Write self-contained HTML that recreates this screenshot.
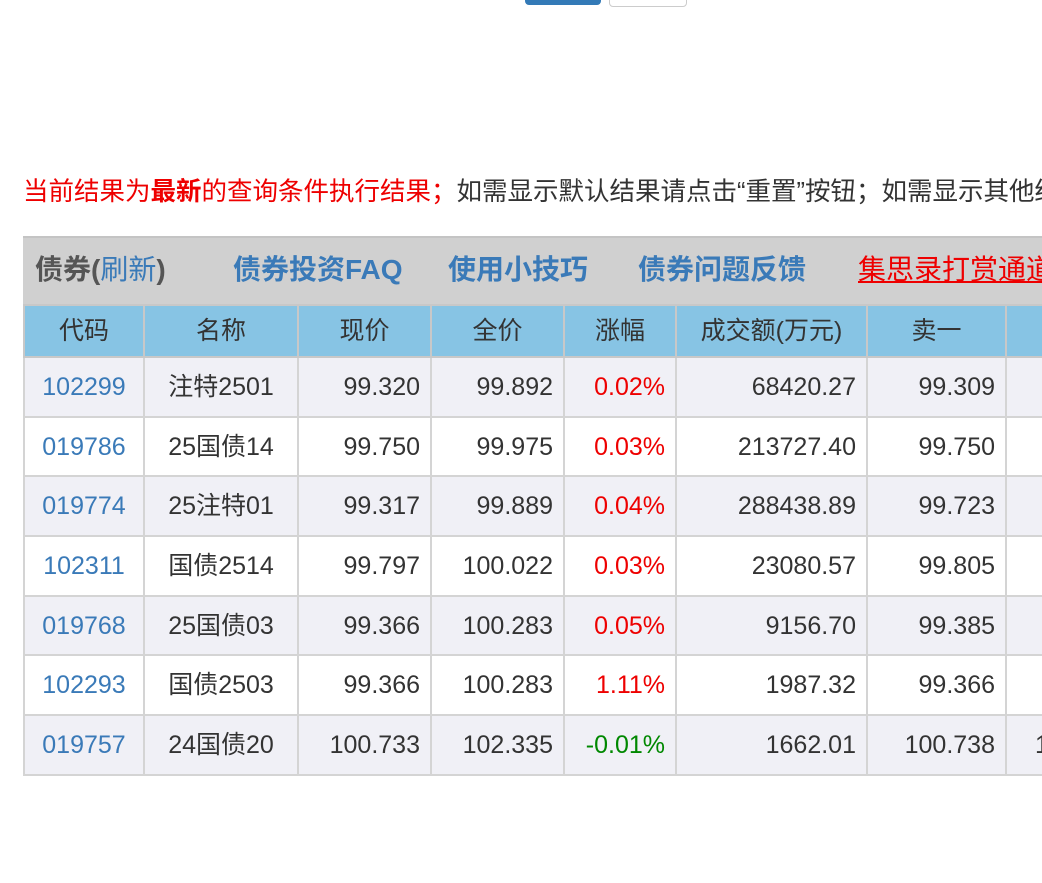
<!DOCTYPE html>
<html><head><meta charset="utf-8">
<style>
html,body{margin:0;padding:0;background:#fff;width:1042px;height:883px;overflow:hidden;font-family:"Liberation Sans","Noto Sans CJK SC",sans-serif;}
.b1{position:absolute;left:525px;top:-6px;width:76px;height:11px;background:#337ab7;border-radius:4px;}
.b2{position:absolute;left:609px;top:-6px;width:76px;height:11px;background:#fff;border:1px solid #ccc;border-radius:4px;}
.msg{position:absolute;left:23px;top:175px;font-size:25.5px;white-space:nowrap;color:#333;line-height:34px;}
.msg .r{color:#e00;}
.wrap{position:absolute;left:23px;top:236px;width:1019px;overflow:hidden;}
.bar{position:relative;height:68px;background:#d0d0d0;border-top:2px solid #c4c4c4;box-sizing:border-box;white-space:nowrap;font-size:28px;font-weight:bold;line-height:64px;color:#555;}
.bar span{position:absolute;top:0;}
.bar .l{color:#3a7ab8;}
.bar .n{font-weight:normal;color:#3a7ab8;position:static;}
.bar .red{color:#e00;text-decoration:underline;}
table{border-collapse:collapse;table-layout:fixed;font-size:25px;color:#333;width:1112px;}
td,th{border:2px solid #d4d4d4;padding:0 10px;height:57.7px;white-space:nowrap;overflow:hidden;vertical-align:middle;line-height:30px;}
th{background:#87c4e4;font-weight:normal;height:50px;border-color:#c8c8c8;}
tr:nth-child(even) td{background:#f0f0f6;}
td{text-align:right;}
td.c{text-align:center;color:#3a7ab8;}
td.m{text-align:center;}
.up{color:#e00;}.dn{color:#080;}
</style></head><body>
<div class="b1"></div><div class="b2"></div>
<div class="msg"><span class="r">当前结果为<b>最新</b>的查询条件执行结果；</span>如需显示默认结果请点击“重置”按钮；如需显示其他结果</div>
<div class="wrap">
<div class="bar"><span style="left:12px">债券(<span class="n">刷新</span>)</span><span class="l" style="left:210px">债券投资FAQ</span><span class="l" style="left:425px">使用小技巧</span><span class="l" style="left:615px">债券问题反馈</span><span class="red" style="left:835px;font-weight:normal">集思录打赏通道</span></div>
<table>
<colgroup><col style="width:120px"><col style="width:154px"><col style="width:133px"><col style="width:133px"><col style="width:112px"><col style="width:191px"><col style="width:139px"><col style="width:130px"></colgroup>
<tr><th>代码</th><th>名称</th><th>现价</th><th>全价</th><th>涨幅</th><th>成交额(万元)</th><th>卖一</th><th></th></tr>
<tr><td class="c">102299</td><td class="m">注特2501</td><td>99.320</td><td>99.892</td><td class="up">0.02%</td><td>68420.27</td><td>99.309</td><td></td></tr>
<tr><td class="c">019786</td><td class="m">25国债14</td><td>99.750</td><td>99.975</td><td class="up">0.03%</td><td>213727.40</td><td>99.750</td><td></td></tr>
<tr><td class="c">019774</td><td class="m">25注特01</td><td>99.317</td><td>99.889</td><td class="up">0.04%</td><td>288438.89</td><td>99.723</td><td></td></tr>
<tr><td class="c">102311</td><td class="m">国债2514</td><td>99.797</td><td>100.022</td><td class="up">0.03%</td><td>23080.57</td><td>99.805</td><td></td></tr>
<tr><td class="c">019768</td><td class="m">25国债03</td><td>99.366</td><td>100.283</td><td class="up">0.05%</td><td>9156.70</td><td>99.385</td><td></td></tr>
<tr><td class="c">102293</td><td class="m">国债2503</td><td>99.366</td><td>100.283</td><td class="up">1.11%</td><td>1987.32</td><td>99.366</td><td></td></tr>
<tr><td class="c">019757</td><td class="m">24国债20</td><td>100.733</td><td>102.335</td><td class="dn">-0.01%</td><td>1662.01</td><td>100.738</td><td style="text-align:left;padding-left:28px">100.7</td></tr>
</table>
</div>
</body></html>
